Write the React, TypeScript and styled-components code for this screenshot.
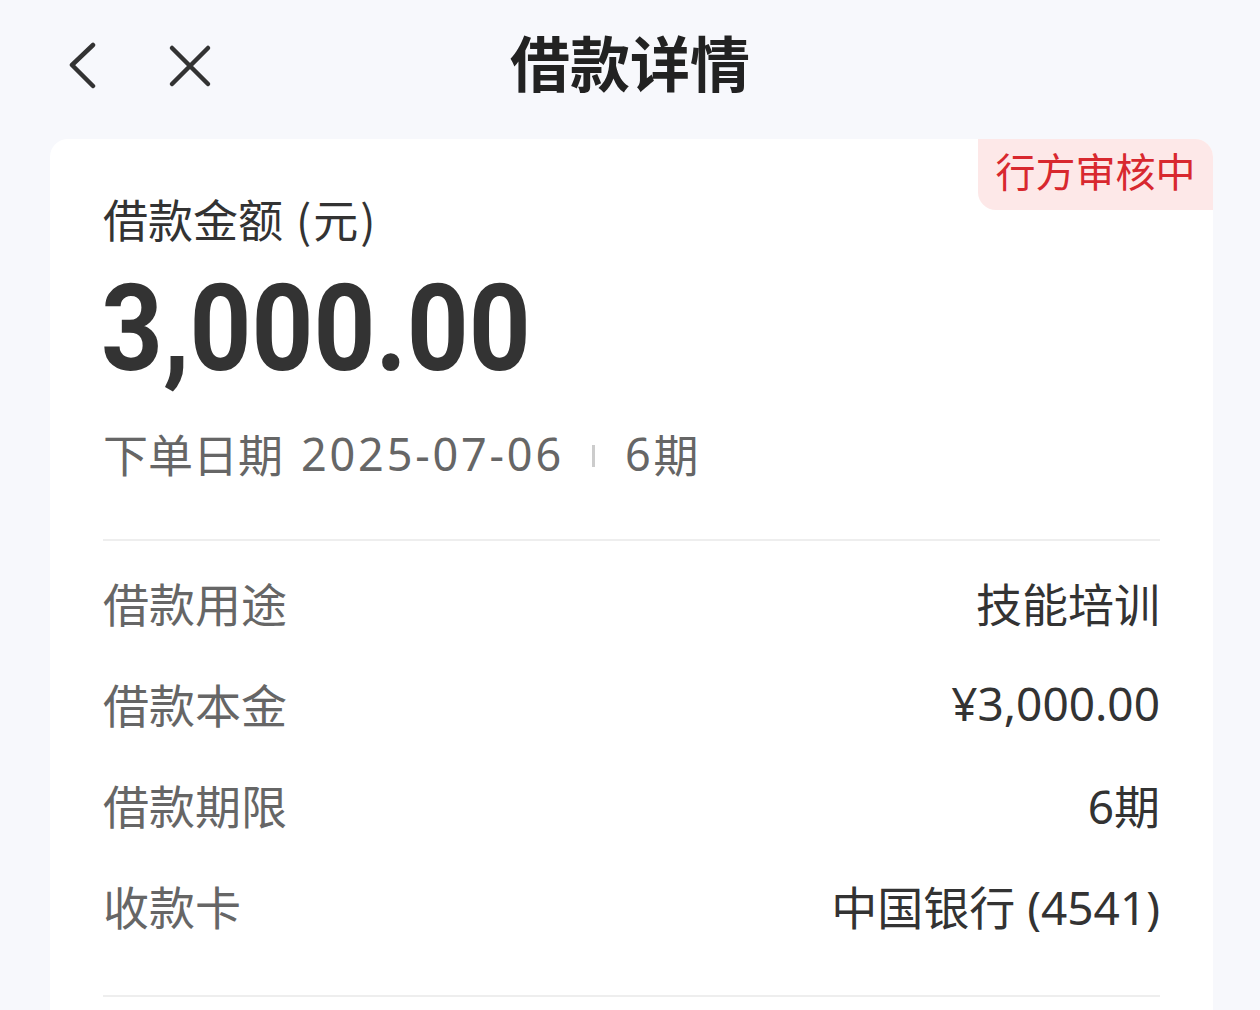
import React from "react";
import styled, { createGlobalStyle } from "styled-components";

const Global = createGlobalStyle`
  html, body { margin: 0; padding: 0; background: #f7f8fc; }
  body { font-family: "Noto Sans CJK SC", "Noto Sans", sans-serif; }
  * { box-sizing: border-box; }
`;

const Page = styled.div`
  width: 1260px;
  min-height: 1010px;
  background: #f7f8fc;
  overflow: hidden;
`;

const Header = styled.div`
  position: relative;
  height: 134px;
  margin-bottom: 5px;
  display: flex;
  align-items: center;
  justify-content: center;
`;

const NavIcons = styled.div`
  position: absolute;
  left: 62px;
  top: 0;
  height: 134px;
  display: flex;
  align-items: center;
  gap: 62px;
`;

const IconBtn = styled.div`
  width: 44px;
  height: 44px;
  display: flex;
  align-items: center;
  justify-content: center;
  margin-top: -2px;
`;

const Title = styled.h1`
  margin: 0;
  font-size: 60px;
  font-weight: 700;
  color: #222;
  line-height: 1;
  margin-top: -12px;
`;

const Card = styled.div`
  position: relative;
  margin: 0 47px 0 50px;
  background: #fff;
  border-radius: 18px 18px 0 0;
  padding: 50px 53px 0 53px;
  min-height: 880px;
`;

const Badge = styled.div`
  position: absolute;
  top: 0;
  right: 0;
  width: 235px;
  height: 71px;
  background: #fde8e8;
  color: #d8282f;
  font-size: 40px;
  border-radius: 0 18px 0 18px;
  display: flex;
  align-items: center;
  justify-content: center;
  padding-bottom: 10px;
`;

const AmountLabel = styled.div`
  font-size: 45px;
  line-height: 60px;
  color: #333;
`;

const Unit = styled.span`
  letter-spacing: 2px;
  margin-left: 13px;
`;

const Amount = styled.div`
  font-family: "Roboto", sans-serif;
  font-weight: 700;
  font-size: 120px;
  line-height: 160px;
  letter-spacing: 0px;
  color: #333;
  transform: scaleX(0.9);
  transform-origin: left center;
  margin-left: -2px;
`;

const MetaLine = styled.div`
  margin-top: 15px;
  display: flex;
  align-items: center;
  font-size: 45px;
  line-height: 60px;
  color: #666;
`;

const MetaNum = styled.span<{ $ml?: number }>`
  font-family: "Noto Sans", sans-serif;
  letter-spacing: 2.8px;
  margin-left: ${(p) => (p.$ml ?? 0)}px;
`;

const Sep = styled.span`
  display: inline-block;
  width: 3px;
  height: 22px;
  background: #ccc;
  margin: 4px 30px 0 28px;
`;

const Divider = styled.div<{ $mt: number }>`
  height: 2px;
  background: #eeeeee;
  margin-top: ${(p) => p.$mt}px;
`;

const Rows = styled.div`
  padding: 10px 0 40px;
`;

const Row = styled.div`
  height: 101px;
  display: flex;
  align-items: center;
  justify-content: space-between;
  font-size: 46px;
`;

const Label = styled.span`
  color: #666;
`;

const Value = styled.span`
  color: #333;
  font-family: "Noto Sans", "Noto Sans CJK SC", sans-serif;
`;

const rows = [
  ["借款用途", "技能培训"],
  ["借款本金", "¥3,000.00"],
  ["借款期限", "6期"],
  ["收款卡", "中国银行 (4541)"],
];

export default function App() {
  return (
    <Page>
      <Global />
      <Header>
        <NavIcons>
          <IconBtn>
            <svg width="44" height="48" viewBox="0 0 44 48" fill="none">
              <path d="M31 3 L10 23 L31 44" stroke="#333" strokeWidth="4.5" strokeLinecap="round" strokeLinejoin="round" />
            </svg>
          </IconBtn>
          <IconBtn>
            <svg width="44" height="44" viewBox="0 0 44 44" fill="none">
              <path d="M4 4 L40 40 M40 4 L4 40" stroke="#333" strokeWidth="4.5" strokeLinecap="round" />
            </svg>
          </IconBtn>
        </NavIcons>
        <Title>借款详情</Title>
      </Header>
      <Card>
        <Badge>行方审核中</Badge>
        <AmountLabel>
          借款金额<Unit>(元)</Unit>
        </AmountLabel>
        <Amount>3,000.00</Amount>
        <MetaLine>
          下单日期<MetaNum $ml={18}>2025-07-06</MetaNum>
          <Sep />
          <MetaNum>6</MetaNum>期
        </MetaLine>
        <Divider $mt={55} />
        <Rows>
          {rows.map(([l, v]) => (
            <Row key={l}>
              <Label>{l}</Label>
              <Value>{v}</Value>
            </Row>
          ))}
        </Rows>
        <Divider $mt={0} />
      </Card>
    </Page>
  );
}
